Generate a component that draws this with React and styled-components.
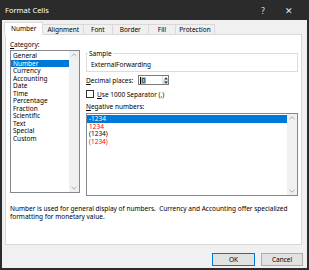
import React from 'react';
import styled, { createGlobalStyle } from 'styled-components';

const Global = createGlobalStyle`
  html, body {
    margin: 0;
    padding: 0;
    background: #2b2b2b;
  }
  * {
    box-sizing: border-box;
  }
`;

const Window = styled.div`
  width: 309px;
  height: 270px;
  display: flex;
  flex-direction: column;
  background: #f0f0f0;
  border: 2px solid #2b2b2b;
  border-top: none;
  font-family: 'Noto Sans', 'Open Sans', sans-serif;
  font-size: 6.5px;
  color: #000;
  overflow: hidden;
`;

const TitleBar = styled.div`
  height: 20px;
  margin: 0 -2px;
  padding: 0 7px 0 5px;
  background: #2b2b2b;
  color: #fff;
  display: flex;
  align-items: center;
  font-size: 7.5px;
`;

const Title = styled.span`
  flex: 1;
`;

const TitleButton = styled.span`
  width: 26px;
  text-align: center;
  font-size: ${({ $size }) => $size || '8px'};
  color: #e8e8e8;
`;

const Tabs = styled.div`
  display: flex;
  align-items: flex-end;
  height: 14px;
  padding: 0 0 0 3px;
`;

const Tab = styled.div`
  height: ${({ $active }) => ($active ? '13px' : '11px')};
  padding: 0 ${({ $pad }) => $pad || '5px'};
  display: flex;
  align-items: center;
  background: ${({ $active }) => ($active ? '#fff' : '#f0f0f0')};
  border: 1px solid #d9d9d9;
  border-bottom: 1px solid ${({ $active }) => ($active ? '#fff' : '#d9d9d9')};
  margin-left: -1px;
  margin-bottom: -1px;
  position: relative;
  z-index: ${({ $active }) => ($active ? 2 : 1)};
`;

const Panel = styled.div`
  margin: 0 5px 0 3px;
  height: 211px;
  background: #fff;
  border: 1px solid #d9d9d9;
  padding: 5px 3px 0 4px;
  display: flex;
  flex-direction: column;
`;

const Columns = styled.div`
  display: flex;
  gap: 6px;
`;

const LeftCol = styled.div`
  width: 70px;
  display: flex;
  flex-direction: column;
`;

const RightCol = styled.div`
  flex: 1;
  display: flex;
  flex-direction: column;
  padding-top: 10px;
`;

const Label = styled.div`
  height: ${({ $h }) => $h || '9px'};
  line-height: ${({ $lh, $h }) => $lh || $h || '9px'};
  margin-top: ${({ $mt }) => $mt || '0'};
  white-space: nowrap;
`;

const U = styled.span`
  text-decoration: underline;
`;

const ListBox = styled.div`
  height: ${({ $h }) => $h};
  border: 1px solid #828790;
  display: flex;
  background: #fff;
`;

const Items = styled.div`
  flex: 1;
  padding-top: 1px;
`;

const Item = styled.div`
  height: 7.5px;
  line-height: 7.5px;
  padding-left: 2px;
  white-space: nowrap;
  background: ${({ $selected }) => ($selected ? '#0078d7' : 'transparent')};
  color: ${({ $selected, $red }) => ($selected ? '#fff' : $red ? '#ff0000' : '#000')};
`;

const ScrollBar = styled.div`
  width: 10px;
  background: #f0f0f0;
  display: flex;
  flex-direction: column;
  justify-content: space-between;
  align-items: center;
  padding: 2px 0;
`;

const Chevron = ({ down }) => (
  <svg width="6" height="4" viewBox="0 0 6 4">
    <path
      d={down ? 'M0.5 0.8 L3 3.2 L5.5 0.8' : 'M0.5 3.2 L3 0.8 L5.5 3.2'}
      stroke="#a6a6a6"
      strokeWidth="0.9"
      fill="none"
    />
  </svg>
);

const Group = styled.fieldset`
  margin: 0;
  height: 22px;
  border: 1px solid #dcdcdc;
  padding: 4px 0 0 4px;
  min-width: 0;
`;

const Legend = styled.legend`
  padding: 0 1px;
  margin-left: -3px;
  line-height: 7px;
`;

const SampleText = styled.div`
  line-height: 7px;
`;

const Row = styled.div`
  display: flex;
  align-items: center;
  height: 12px;
  margin-top: ${({ $mt }) => $mt || '0'};
  gap: ${({ $gap }) => $gap || '0'};
`;

const SpinBox = styled.div`
  width: 31px;
  height: 10px;
  margin-left: 5px;
  border: 1px solid #7a7a7a;
  display: flex;
  align-items: center;
  padding-left: 1px;
`;

const SpinValue = styled.div`
  flex: 1;
  display: flex;
  align-items: center;
`;

const Selected = styled.span`
  background: #99c9ef;
  padding: 0 0.5px;
  line-height: 7px;
  border-left: 0.5px solid #000;
`;

const Spinner = styled.div`
  width: 6px;
  height: 100%;
  display: flex;
  flex-direction: column;
  border-left: 1px solid #e0e0e0;
`;

const SpinHalf = styled.div`
  flex: 1;
  display: flex;
  align-items: center;
  justify-content: center;
  background: ${({ $hot }) => ($hot ? '#cce4f7' : '#fff')};
`;

const Tri = ({ down }) => (
  <svg width="4" height="3" viewBox="0 0 4 3">
    <path d={down ? 'M0 0.5 L4 0.5 L2 2.8 Z' : 'M0 2.5 L4 2.5 L2 0.2 Z'} fill="#333" />
  </svg>
);

const CheckBox = styled.div`
  width: 8px;
  height: 8px;
  border: 1px solid #333;
  background: #fff;
`;

const Description = styled.div`
  margin-top: 9px;
  line-height: 8px;
  white-space: pre;
`;

const Footer = styled.div`
  flex: 1;
  display: flex;
  justify-content: flex-end;
  align-items: flex-start;
  padding: 8px 4px 0 0;
  gap: 6px;
`;

const Button = styled.div`
  width: ${({ $w }) => $w || '43px'};
  height: 13px;
  display: flex;
  align-items: center;
  justify-content: center;
  background: #e1e1e1;
  border: 1px solid ${({ $primary }) => ($primary ? '#0078d7' : '#adadad')};
`;

const categories = [
  'General',
  'Number',
  'Currency',
  'Accounting',
  'Date',
  'Time',
  'Percentage',
  'Fraction',
  'Scientific',
  'Text',
  'Special',
  'Custom',
];

const negatives = [
  { text: '-1234', selected: true },
  { text: '1234', red: true },
  { text: '(1234)' },
  { text: '(1234)', red: true },
];

const tabs = [
  { name: 'Number', pad: '6px' },
  { name: 'Alignment', pad: '4px' },
  { name: 'Font', pad: '7px' },
  { name: 'Border', pad: '7px' },
  { name: 'Fill', pad: '9px' },
  { name: 'Protection', pad: '3px' },
];

const App = () => (
  <>
    <Global />
    <Window>
      <TitleBar>
        <Title>Format Cells</Title>
        <TitleButton>?</TitleButton>
        <TitleButton $size="9px">✕</TitleButton>
      </TitleBar>
      <Tabs>
        {tabs.map((t, i) => (
          <Tab key={t.name} $active={i === 0} $pad={t.pad}>
            {t.name}
          </Tab>
        ))}
      </Tabs>
      <Panel>
        <Columns>
          <LeftCol>
            <Label $h="10px">
              <U>C</U>ategory:
            </Label>
            <ListBox $h="143px">
              <Items>
                {categories.map((c) => (
                  <Item key={c} $selected={c === 'Number'}>
                    {c}
                  </Item>
                ))}
              </Items>
              <ScrollBar>
                <Chevron />
                <Chevron down />
              </ScrollBar>
            </ListBox>
          </LeftCol>
          <RightCol>
            <Group>
              <Legend>Sample</Legend>
              <SampleText>ExternalForwarding</SampleText>
            </Group>
            <Row $mt="2px">
              <Label>
                <U>D</U>ecimal places:
              </Label>
              <SpinBox>
                <SpinValue>
                  <Selected>0</Selected>
                </SpinValue>
                <Spinner>
                  <SpinHalf>
                    <Tri />
                  </SpinHalf>
                  <SpinHalf $hot>
                    <Tri down />
                  </SpinHalf>
                </Spinner>
              </SpinBox>
            </Row>
            <Row $mt="2px" $gap="3px">
              <CheckBox />
              <Label>
                <U>U</U>se 1000 Separator (,)
              </Label>
            </Row>
            <Label $h="11px" $lh="9px" $mt="2px">
              <U>N</U>egative numbers:
            </Label>
            <ListBox $h="83px">
              <Items>
                {negatives.map((n, i) => (
                  <Item key={i} $selected={n.selected} $red={n.red}>
                    {n.text}
                  </Item>
                ))}
              </Items>
              <ScrollBar>
                <Chevron />
                <Chevron down />
              </ScrollBar>
            </ListBox>
          </RightCol>
        </Columns>
        <Description>
          {'Number is used for general display of numbers.  Currency and Accounting offer specialized\nformatting for monetary value.'}
        </Description>
      </Panel>
      <Footer>
        <Button $primary>OK</Button>
        <Button $w="42px">Cancel</Button>
      </Footer>
    </Window>
  </>
);

export default App;
